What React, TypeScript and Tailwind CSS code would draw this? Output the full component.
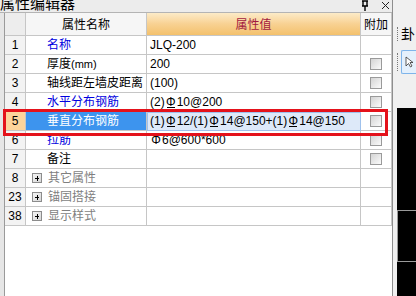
import type { ReactNode } from "react";

type Row = {
  n: string;
  name: string;
  blue?: boolean;
  value: string;
  check: boolean;
  selected?: boolean;
};

const rows: Row[] = [
  { n: "1", name: "名称", blue: true, value: "JLQ-200", check: false },
  { n: "2", name: "厚度", value: "200", check: true },
  { n: "3", name: "轴线距左墙皮距离", value: "(100)", check: true },
  { n: "4", name: "水平分布钢筋", blue: true, value: "(2)#10@200", check: true },
  { n: "5", name: "垂直分布钢筋", blue: true, value: "(1)#12/(1)#14@150+(1)#14@150", check: true, selected: true },
  { n: "6", name: "拉筋", blue: true, value: "$6@600*600", check: true },
  { n: "7", name: "备注", value: "", check: true },
];

const groups = [
  { n: "8", name: "其它属性" },
  { n: "23", name: "锚固搭接" },
  { n: "38", name: "显示样式" },
];

const cjk = "font-['Liberation_Sans','Noto_Sans_CJK_SC',sans-serif]";

// rebar grade glyphs: # = HRB335 (Φ with base bar), $ = HPB300 (Φ)
function Rebar({ bar }: { bar: boolean }) {
  return (
    <span className="relative inline-block w-[12px] text-center">
      Φ
      {bar && <span className="absolute bottom-[3px] left-[2px] h-px w-[8px] bg-black" />}
    </span>
  );
}

function Value({ text }: { text: string }) {
  const parts: ReactNode[] = [];
  let buf = "";
  text.split("").forEach((ch, i) => {
    if (ch === "#" || ch === "$") {
      if (buf) parts.push(<span key={"t" + i}>{buf}</span>);
      buf = "";
      parts.push(<Rebar key={"r" + i} bar={ch === "#"} />);
    } else buf += ch;
  });
  if (buf) parts.push(<span key="end">{buf}</span>);
  return <>{parts}</>;
}

function Check() {
  return (
    <span className="block h-[12px] w-[12px] border border-[#9a9a9a] bg-gradient-to-br from-[#d4d4d4] to-[#fbfbfb]" />
  );
}

function PlusBox() {
  return (
    <span className="relative block h-[10px] w-[10px] border border-[#8c8c8c] bg-gradient-to-br from-[#f4f4f4] to-[#d8d8d8]">
      <span className="absolute left-[2px] top-[4px] h-px w-[4px] bg-black" />
      <span className="absolute left-[3.5px] top-[2px] h-[5px] w-px bg-black" />
    </span>
  );
}

const cell = "border-b border-r border-[#c6c6c6]";

export default function App() {
  return (
    <div className={`flex h-[296px] w-[416px] overflow-hidden bg-white text-[12px] ${cjk}`}>
      {/* property editor panel */}
      <div className="flex w-[393px] flex-col border-r border-[#8e8e8e]">
        <div className="flex h-[13px] shrink-0 items-end overflow-hidden border-b border-[#b4b4b4] bg-[#ececec]">
          <span className="mb-[1px] text-[15px] leading-none">属性编辑器</span>
          <div className="flex-1" />
          <svg width="8" height="11" viewBox="0 0 8 11" className="mb-[1px] mr-[12px]">
            <path d="M1 1h6M2 1v5M6 1v5M1 6h6M4 6v5" stroke="#000" strokeWidth="1.4" fill="none" />
          </svg>
          <svg width="9" height="9" viewBox="0 0 9 9" className="mb-[2px] mr-[2px]">
            <path d="M1 1l7 7M8 1l-7 7" stroke="#222" strokeWidth="1" />
          </svg>
        </div>

        <div className="flex flex-1">
          <div className="w-[5px] border-r border-[#9a9a9a] bg-[#e6e6e6]" />
          <div className="relative flex-1">
            <div className="grid grid-cols-[21px_121px_214px_31px] grid-rows-[23px] auto-rows-[19px]">
              <div className={`${cell} bg-[#ededed]`} />
              <div className={`${cell} flex items-center justify-center bg-[#f6f6f6] pt-[2px]`}>属性名称</div>
              <div className={`${cell} flex items-center justify-center bg-gradient-to-b from-[#fcebc8] via-[#f8d192] to-[#f3c16c] pt-[2px] text-[#a3193f]`}>
                属性值
              </div>
              <div className={`${cell} flex items-center justify-center bg-[#f6f6f6] pt-[2px]`}>附加</div>

              {rows.map((r) => (
                <div key={r.n} className="contents">
                  <div className={`${cell} flex items-center justify-center ${r.selected ? "bg-[#fdd49c]" : "bg-[#f3f3f3]"}`}>
                    {r.n}
                  </div>
                  <div
                    className={`${cell} flex items-center pl-[21px] ${
                      r.selected ? "bg-[#3d94ee] text-white" : r.blue ? "text-[#0000e0]" : "text-black"
                    }`}
                  >
                    {r.name}
                    {r.n === "2" && <span className="text-[11px]">(mm)</span>}
                  </div>
                  <div
                    className={`${cell} flex items-center whitespace-nowrap pl-[3px] ${
                      r.selected ? "bg-[#dde9f9] outline outline-1 -outline-offset-1 outline-[#9fc1ec]" : ""
                    }`}
                  >
                    <Value text={r.value} />
                  </div>
                  <div className={`${cell} flex items-center justify-center`}>{r.check && <Check />}</div>
                </div>
              ))}

              {groups.map((g) => (
                <div key={g.n} className="contents">
                  <div className={`${cell} flex items-center justify-center bg-[#f3f3f3]`}>{g.n}</div>
                  <div className={`${cell} flex items-center gap-[6px] pl-[6px] text-[#7f7f7f]`}>
                    <PlusBox />
                    {g.name}
                  </div>
                  <div className={cell} />
                  <div className={cell} />
                </div>
              ))}
            </div>

            {/* selection highlight */}
            <div className="pointer-events-none absolute left-[-2px] top-[96px] h-[27px] w-[385px] border-[3px] border-[#e4121b]" />
          </div>
        </div>
      </div>

      {/* docked toolbar strip */}
      <div className="flex flex-1 bg-[#f0f0f0]">
        <div className="w-[4px]" />
        <div className="flex flex-1 flex-col">
          <div className="flex h-[108px] flex-col">
            <div className="h-[24px]" />
            <div className="flex h-[20px] items-center gap-[3px]">
              <span className="h-[14px] w-px border-l border-dotted border-[#777]" />
              <span className="text-[14px] leading-none">卦</span>
            </div>
            <div className="h-[6px]" />
            <div className="flex h-[24px] items-center gap-[3px]">
              <span className="h-[18px] w-px border-l border-dotted border-[#777]" />
              <span className="flex h-[24px] flex-1 items-center justify-center rounded-l-[2px] border border-r-0 border-[#7eb4ea] bg-[#e4f0fc]">
                <svg width="9" height="12" viewBox="0 0 9 12">
                  <path d="M1 1v9l2.5-2.5 2 3.5 1.5-1-2-3.5H8z" fill="#fff" stroke="#333" strokeWidth="0.8" />
                </svg>
              </span>
            </div>
          </div>
          <div className="flex flex-1 flex-col bg-black">
            <div className="h-[102px]" />
            <div className="h-[52px] border-y border-l border-[#9a9a9a]" />
          </div>
        </div>
      </div>
    </div>
  );
}
